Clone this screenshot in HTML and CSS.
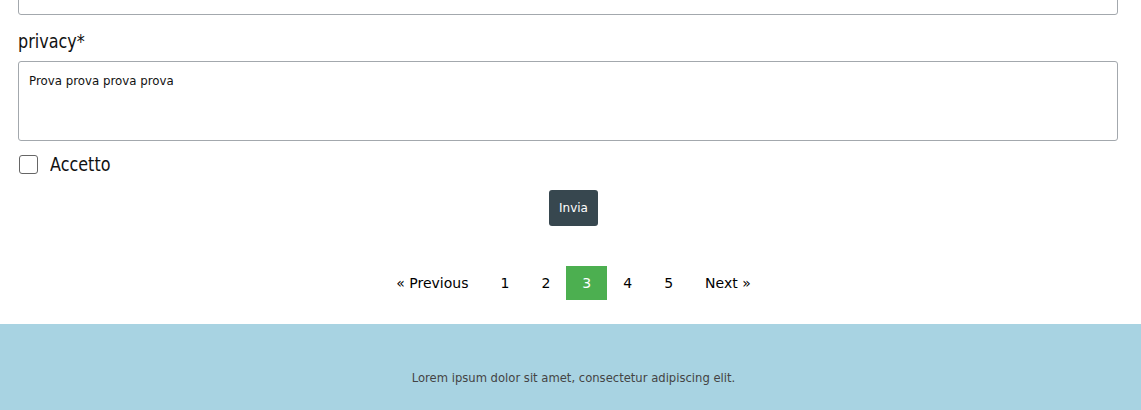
FILE: index.html
```html
<!DOCTYPE html>
<html lang="it">
<head>
  <meta charset="UTF-8" />
  <title>Contatti</title>
  <link rel="stylesheet" href="styles.css">
</head>
<body>
  <div class="container">
    <form class="contact-form">
      <input type="text" class="field field-text" />

      <label for="privacy" class="field-label">privacy*</label>
      <textarea id="privacy" class="field field-area" readonly>Prova prova prova prova</textarea>

      <label class="check-row">
        <input type="checkbox" class="check-box" />
        <span class="check-label">Accetto</span>
      </label>

      <div class="form-actions">
        <button type="button" class="btn-send">Invia</button>
      </div>
    </form>

    <!-- Pagination -->
    <div class="pagination">
      <a href="#">&laquo; Previous</a>
      <a href="#">1</a>
      <a href="#">2</a>
      <a href="#" class="active">3</a>
      <a href="#">4</a>
      <a href="#">5</a>
      <a href="#">Next &raquo;</a>
    </div>
  </div>

  <footer class="footer">
    <p>Lorem ipsum dolor sit amet, consectetur adipiscing elit.</p>
  </footer>
</body>
</html>
```

FILE: styles.css
```css
body {
  margin: 0;
  padding: 0;
  font-family: Tahoma, "DejaVu Sans", sans-serif;
  background: #fff;
  color: #000;
  overflow: hidden;
}
.container {
  padding: 0 23px 0 18px;
}
.contact-form {
  display: flex;
  flex-direction: column;
}
.field {
  box-sizing: border-box;
  width: 100%;
  border: 1px solid #a3a8ad;
  border-radius: 3px;
  background: #fff;
  font-family: "DejaVu Sans", sans-serif;
  font-size: 11.8px;
}
.field-text {
  height: 36px;
  margin-top: -21px;
}
/* no condensed face installed, so squeeze the normal one */
.field-label,
.check-label {
  font-family: "DejaVu Sans", sans-serif;
  font-size: 20px;
  color: #111;
  transform: scaleX(0.8);
  transform-origin: left center;
}
.field-label {
  align-self: flex-start;
  margin: 14px 0 8px;
  line-height: 24px;
}
.field-area {
  height: 80px;
  padding: 12px 10px 10px;
  resize: none;
  color: #111;
}
.check-row {
  display: flex;
  align-items: center;
  gap: 12px;
  margin-top: 11px;
}
.check-box {
  width: 19px;
  height: 19px;
  margin: 0 0 0 1px;
  appearance: none;
  border: 1.5px solid #666;
  border-radius: 3px;
  background: #fff;
}
.form-actions {
  display: flex;
  justify-content: center;
  margin-top: 14px;
  padding-left: 11px;
}
.btn-send {
  background: #37474f;
  color: #fff;
  border: none;
  border-radius: 3px;
  padding: 0 10px;
  height: 36px;
  font-family: "DejaVu Sans", sans-serif;
  font-size: 12px;
  cursor: pointer;
}
.pagination {
  display: flex;
  justify-content: center;
  margin: 40px 0 24px;
  padding-left: 11px;
}
.pagination a {
  color: #000;
  text-decoration: none;
  padding: 8px 16px;
  font-size: 14px;
  line-height: 18px;
}
.pagination a.active {
  background-color: #4caf50;
  color: #fff;
}
.footer {
  background: #a8d3e2;
  text-align: center;
  padding: 47px 0 40px 6px;
}
.footer p {
  margin: 0;
  font-family: "DejaVu Sans", sans-serif;
  font-size: 11.6px;
  color: #444;
}
```
